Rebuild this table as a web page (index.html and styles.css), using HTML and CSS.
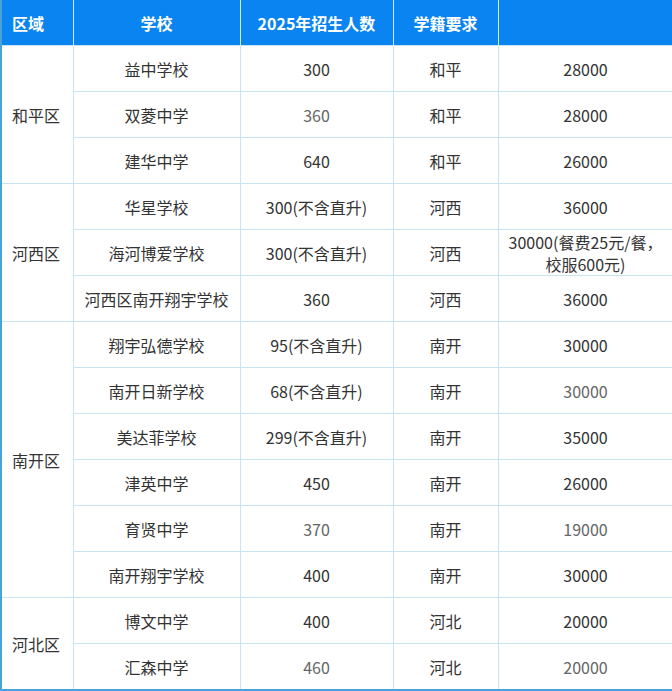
FILE: index.html
```html
<!DOCTYPE html>
<html lang="zh-CN">
<head>
<meta charset="utf-8">
<link rel="stylesheet" href="styles.css">
</head>
<body>
<table class="grid">
  <colgroup>
    <col class="c1"><col class="c2"><col class="c3"><col class="c4"><col class="c5">
  </colgroup>
  <thead>
    <tr><th>区域</th><th>学校</th><th>2025年招生人数</th><th>学籍要求</th><th></th></tr>
  </thead>
  <tbody>
    <tr><td rowspan="3">和平区</td><td>益中学校</td><td>300</td><td>和平</td><td>28000</td></tr>
    <tr><td>双菱中学</td><td class="muted">360</td><td>和平</td><td>28000</td></tr>
    <tr><td>建华中学</td><td>640</td><td>和平</td><td>26000</td></tr>
    <tr><td rowspan="3">河西区</td><td>华星学校</td><td>300(不含直升)</td><td>河西</td><td>36000</td></tr>
    <tr><td>海河博爱学校</td><td>300(不含直升)</td><td>河西</td><td class="two">30000(餐费25元/餐，<br>校服600元)</td></tr>
    <tr><td>河西区南开翔宇学校</td><td>360</td><td>河西</td><td>36000</td></tr>
    <tr><td rowspan="6">南开区</td><td>翔宇弘德学校</td><td>95(不含直升)</td><td>南开</td><td>30000</td></tr>
    <tr><td>南开日新学校</td><td>68(不含直升)</td><td>南开</td><td class="muted">30000</td></tr>
    <tr><td>美达菲学校</td><td>299(不含直升)</td><td>南开</td><td>35000</td></tr>
    <tr><td>津英中学</td><td>450</td><td>南开</td><td>26000</td></tr>
    <tr><td>育贤中学</td><td class="muted">370</td><td>南开</td><td class="muted">19000</td></tr>
    <tr><td>南开翔宇学校</td><td>400</td><td>南开</td><td>30000</td></tr>
    <tr><td rowspan="2">河北区</td><td>博文中学</td><td>400</td><td>河北</td><td>20000</td></tr>
    <tr><td>汇森中学</td><td class="muted">460</td><td>河北</td><td class="muted">20000</td></tr>
  </tbody>
</table>
</body>
</html>
```
FILE: styles.css
```css
html, body {
  margin: 0;
  padding: 0;
  background: #ffffff;
}
.grid {
  width: 672px;
  border-collapse: collapse;
  table-layout: fixed;
  font-family: "Microsoft YaHei", "Noto Sans CJK SC", "Noto Sans", sans-serif;
  font-size: 16px;
  color: #333333;
  border-left: 2px solid #4aa3d8;
  border-bottom: 2px solid #4aa3d8;
}
.c1 { width: 72px; }
.c2 { width: 167px; }
.c3 { width: 153px; }
.c4 { width: 105px; }
.c5 { width: 175px; }
.grid th {
  height: 45px;
  padding: 0;
  background: #0a84f0;
  color: #ffffff;
  font-weight: bold;
  text-align: center;
  border-left: 1px solid #cfe8f8;
  border-right: 1px solid #cfe8f8;
}
.grid th:first-child { text-align: left; padding-left: 10px; border-left: none; }
.grid td {
  height: 45px;
  padding: 0;
  text-align: center;
  vertical-align: middle;
  border: 1px solid #c8e4f0;
  line-height: 22px;
}
.grid td[rowspan] { text-align: left; padding-left: 10px; }
.grid td.muted { color: #666666; }
.grid td.two { line-height: 22px; }
```
